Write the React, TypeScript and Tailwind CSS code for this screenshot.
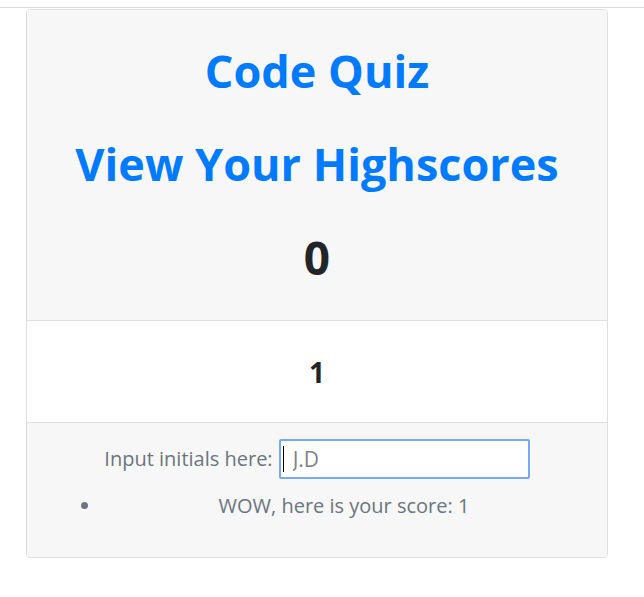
import React from "react";

const font = { fontFamily: '"Open Sans", "Noto Sans", sans-serif' };

function Title({ children, className }: { children: React.ReactNode; className: string }) {
  return (
    <div className="flex h-[93px] items-center justify-center">
      <h1 className={`font-bold leading-none ${className}`}>{children}</h1>
    </div>
  );
}

export default function App() {
  return (
    <div className="min-h-[597px] bg-white" style={font}>
      <div className="pt-[7px]">
        <div className="h-px bg-[#dcdcdc]" />
      </div>
      <div className="ml-[26px] mt-px w-[582px] overflow-hidden rounded-[4px] border border-[#dfdfdf]">
        <div className="border-b border-[#dfdfdf] bg-[#f7f7f7] pb-[17px] pt-[14px]">
          <Title className="text-[45px] text-[#007bff]">Code Quiz</Title>
          <Title className="text-[45px] text-[#007bff]">View Your Highscores</Title>
          <Title className="text-[46px] text-[#212529]">0</Title>
        </div>
        <div className="flex h-[102px] items-center justify-center border-b border-[#dfdfdf] bg-white">
          <h3 className="text-[28px] font-bold leading-none text-[#212529]">1</h3>
        </div>
        <div className="bg-[#f7f7f7] pb-[36px] pt-[16px] text-[20px] text-[#6c757d]">
          <div className="flex h-[40px] items-center justify-center gap-[6px]">
            <label htmlFor="initials">Input initials here:</label>
            <div className="relative">
              <input
                id="initials"
                placeholder="J.D"
                className="h-[40px] w-[251px] rounded-[2px] border-2 border-[#78a9f5] bg-white pl-[12px] text-[21px] text-[#495057] outline-none placeholder:text-[#7d8389]"
              />
              <span className="absolute left-[4px] top-[7px] h-[26px] w-px bg-black" />
            </div>
          </div>
          <ul className="mt-[12px] list-disc pl-[75px] pr-[21px] marker:text-[#6c757d]">
            <li className="h-[30px] text-center leading-[30px]">WOW, here is your score: 1</li>
          </ul>
        </div>
      </div>
    </div>
  );
}
